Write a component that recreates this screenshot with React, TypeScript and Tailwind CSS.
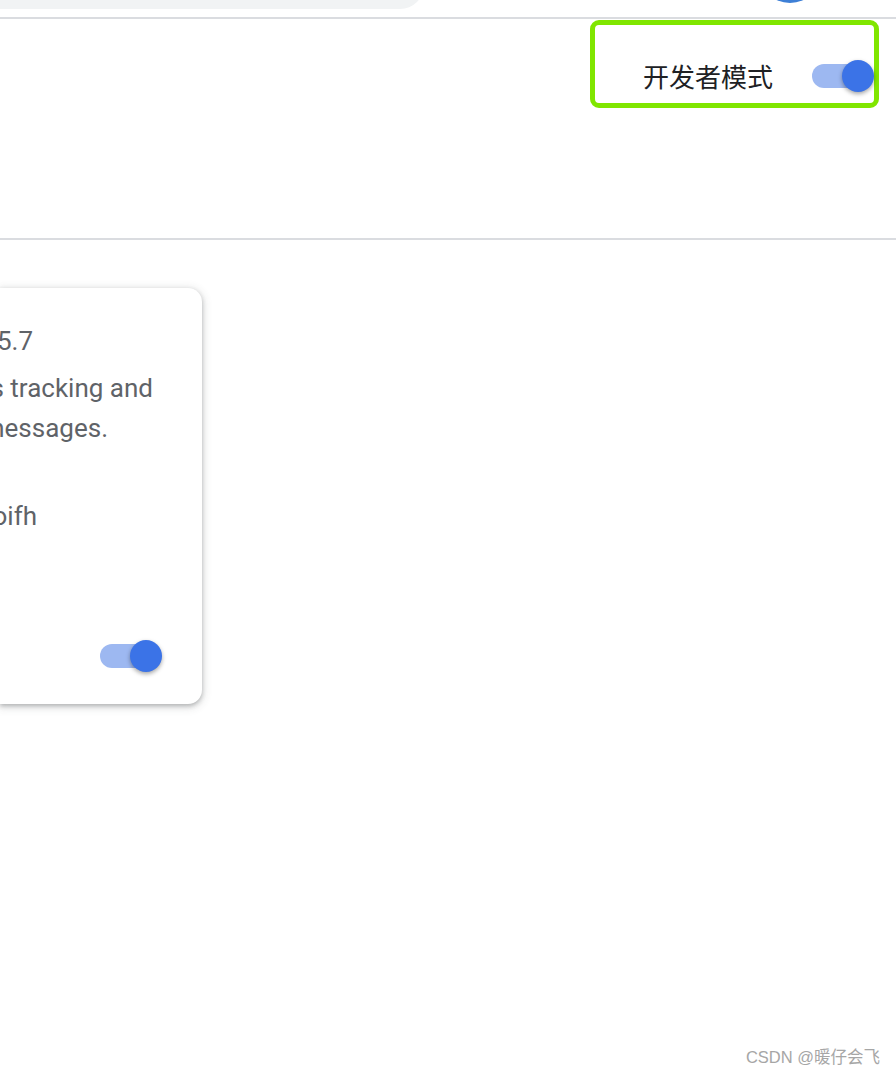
import React from "react";

const Toggle = () => {
  return (
    <div className="relative w-[62px] h-[32px] flex items-center">
      <div className="w-[48px] h-[24px] rounded-full bg-[#9db8f1]" />
      {/* knob sits over the track */}
      <div className="absolute right-0 top-0 w-[32px] h-[32px] rounded-full bg-[#3b73e7] shadow-[0_2px_4px_rgba(0,0,0,0.35)]" />
    </div>
  );
};

// text lines are cut off by the left edge of the window, so they are aligned to the right
const CutLine = ({ text, pr }: { text: string; pr: string }) => {
  return (
    <div className={`flex justify-end overflow-hidden whitespace-nowrap h-[40px] leading-[40px] ${pr}`}>
      <span className="shrink-0">{text}</span>
    </div>
  );
};

export default function App() {
  return (
    <div className="relative w-[896px] h-[1076px] bg-white overflow-hidden font-['Roboto','Noto_Sans_CJK_SC',sans-serif]">
      {/* top bar, mostly scrolled off */}
      <header className="h-[17px] overflow-hidden flex justify-between items-start">
        <div className="w-[424px] h-[48px] -mt-[39px] rounded-r-[24px] bg-[#f1f3f4]" />
        <div className="w-[64px] h-[64px] -mt-[61px] mr-[74px] rounded-full bg-[#3d7fd6]" />
      </header>
      <div className="h-[2px] bg-[#dadce0]" />

      {/* toolbar */}
      <div className="h-[219px] flex justify-end pt-[1px] pr-[17px]">
        <div className="w-[289px] h-[88px] border-[5px] border-[#80e600] rounded-[9px] flex justify-end items-start pt-[35px]">
          <div className="flex items-center h-[32px]">
            <span className="text-[26px] leading-[32px] text-[#202124] font-['Noto_Sans_CJK_SC','Noto_Sans',sans-serif] mr-[39px]">
              开发者模式
            </span>
            <Toggle />
          </div>
        </div>
      </div>
      <div className="h-[2px] bg-[#dadce0]" />

      {/* extension card */}
      <main className="pt-[48px]">
        <div className="w-[202px] h-[416px] bg-white rounded-r-[14px] shadow-[0_2px_4px_rgba(60,64,67,0.3),0_2px_8px_2px_rgba(60,64,67,0.15)] flex flex-col pt-[33px] pb-[32px] text-[26px] text-[#5f6368]">
          <CutLine text="Ghostery Tracker 1.5.7" pr="pr-[169px]" />
          <div className="mt-[7px]">
            <CutLine text="Ghostery blocks tracking and" pr="pr-[49px]" />
            <CutLine text="removes tracking messages." pr="pr-[94px]" />
          </div>
          <div className="mt-[48px]">
            <CutLine text="ID: mlomiejdfkolichcflejclcbmpeaoifh" pr="pr-[165px]" />
          </div>
          <div className="mt-auto flex justify-end pr-[40px]">
            <Toggle />
          </div>
        </div>
      </main>

      {/* watermark */}
      <div className="absolute right-[16px] bottom-[6px] text-[16.5px] text-[#a6a6a6] font-['Liberation_Sans','Noto_Sans_CJK_SC',sans-serif]">
        CSDN @暖仔会飞
      </div>
    </div>
  );
}
